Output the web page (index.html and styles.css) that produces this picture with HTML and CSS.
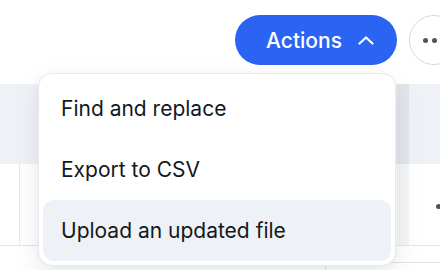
FILE: index.html
```html
<!DOCTYPE html>
<html lang="en">
<head>
<meta charset="utf-8">
<link rel="stylesheet" href="styles.css">
</head>
<body>
<div class="page">
  <div class="toolbar">
    <div class="actions">
      <button class="btn-primary">Actions
        <svg class="chev" width="16" height="9" viewBox="0 0 16 9"><path d="M1.5 7.5 L8 1.5 L14.5 7.5" fill="none" stroke="#fff" stroke-width="2.2" stroke-linecap="round" stroke-linejoin="round"/></svg>
      </button>
      <div class="menu">
        <div class="item">Find and replace</div>
        <div class="item">Export to CSV</div>
        <div class="item active">Upload an updated file</div>
      </div>
    </div>
    <button class="btn-more"><span class="dot"></span><span class="dot"></span><span class="dot"></span></button>
  </div>
  <div class="table">
    <div class="row head">
      <div class="cell first"></div>
      <div class="cell main"></div>
      <div class="cell sticky"></div>
    </div>
    <div class="row body">
      <div class="cell first bordered"></div>
      <div class="cell main"></div>
      <div class="cell sticky"><span class="kebab"><span class="dot"></span><span class="dot"></span><span class="dot"></span></span></div>
    </div>
    <div class="footer">
      <div class="foot-box"></div>
    </div>
  </div>
</div>
</body>
</html>
```
FILE: styles.css
```css
* { box-sizing: border-box; }
html, body { margin: 0; padding: 0; }
body {
  width: 440px;
  height: 270px;
  overflow: hidden;
  background: #fff;
  font-family: Inter, "Noto Sans", sans-serif;
  color: #111827;
}
.page { width: 440px; }
.toolbar {
  height: 84px;
  display: flex;
  justify-content: flex-end;
  align-items: flex-start;
  gap: 12px;
  padding-top: 15px;
  margin-right: -19px;
  position: relative;
  z-index: 2;
}
.actions { position: relative; }
.btn-primary {
  height: 50px;
  width: 162px;
  border: none;
  border-radius: 25px;
  background: #2b63f2;
  color: #fff;
  font-family: inherit;
  font-size: 21px;
  font-weight: 500;
  display: flex;
  align-items: center;
  justify-content: center;
  gap: 16px;
  padding: 0 0 0 8px;
}
.chev { display: block; margin-top: 1px; }
.btn-more {
  width: 50px;
  height: 50px;
  border-radius: 50%;
  border: 1px solid #d4d8df;
  background: #fff;
  display: flex;
  align-items: center;
  justify-content: center;
  gap: 4px;
  padding: 0;
}
.btn-more .dot, .kebab .dot {
  width: 5px;
  height: 5px;
  border-radius: 50%;
  background: #4b5563;
  display: block;
}
.menu {
  position: absolute;
  top: 58px;
  right: 1px;
  width: 358px;
  background: #fff;
  border: 1px solid #e6e8ec;
  border-radius: 14px;
  padding: 4px;
  box-shadow: 0 10px 30px rgba(17, 24, 39, 0.08), 0 2px 8px rgba(17, 24, 39, 0.04);
  display: flex;
  flex-direction: column;
}
.item {
  height: 61px;
  display: flex;
  align-items: center;
  padding-left: 18px;
  font-size: 21px;
  border-radius: 11px;
  color: #141820;
}
.item.active { background: #eef1f6; }
.table { position: relative; z-index: 1; }
.row { display: flex; }
.row.head { height: 80px; background: #eef1f6; }
.row.body { height: 82px; border-bottom: 1px solid #e3e6eb; }
.cell.first { width: 20px; }
.cell.bordered { border-right: 1px solid #e3e6eb; }
.cell.main { flex: 1; }
.cell.sticky {
  width: 31px;
  position: relative;
  display: flex;
  align-items: center;
}
.head .cell.sticky::before,
.body .cell.sticky::before {
  content: "";
  position: absolute;
  left: -12px;
  top: 0;
  bottom: 0;
  width: 12px;
}
.head .cell.sticky::before { background: #e2e5eb; }
.body .cell.sticky::before { background: #f4f5f7; }
.kebab {
  display: flex;
  gap: 4px;
  margin-left: 27px;
  margin-top: 3px;
}
.footer {
  height: 24px;
  display: flex;
  justify-content: flex-end;
  padding-top: 16px;
}
.foot-box {
  width: 115px;
  border-top: 1px solid #e3e6eb;
  border-left: 1px solid #e3e6eb;
}
```
